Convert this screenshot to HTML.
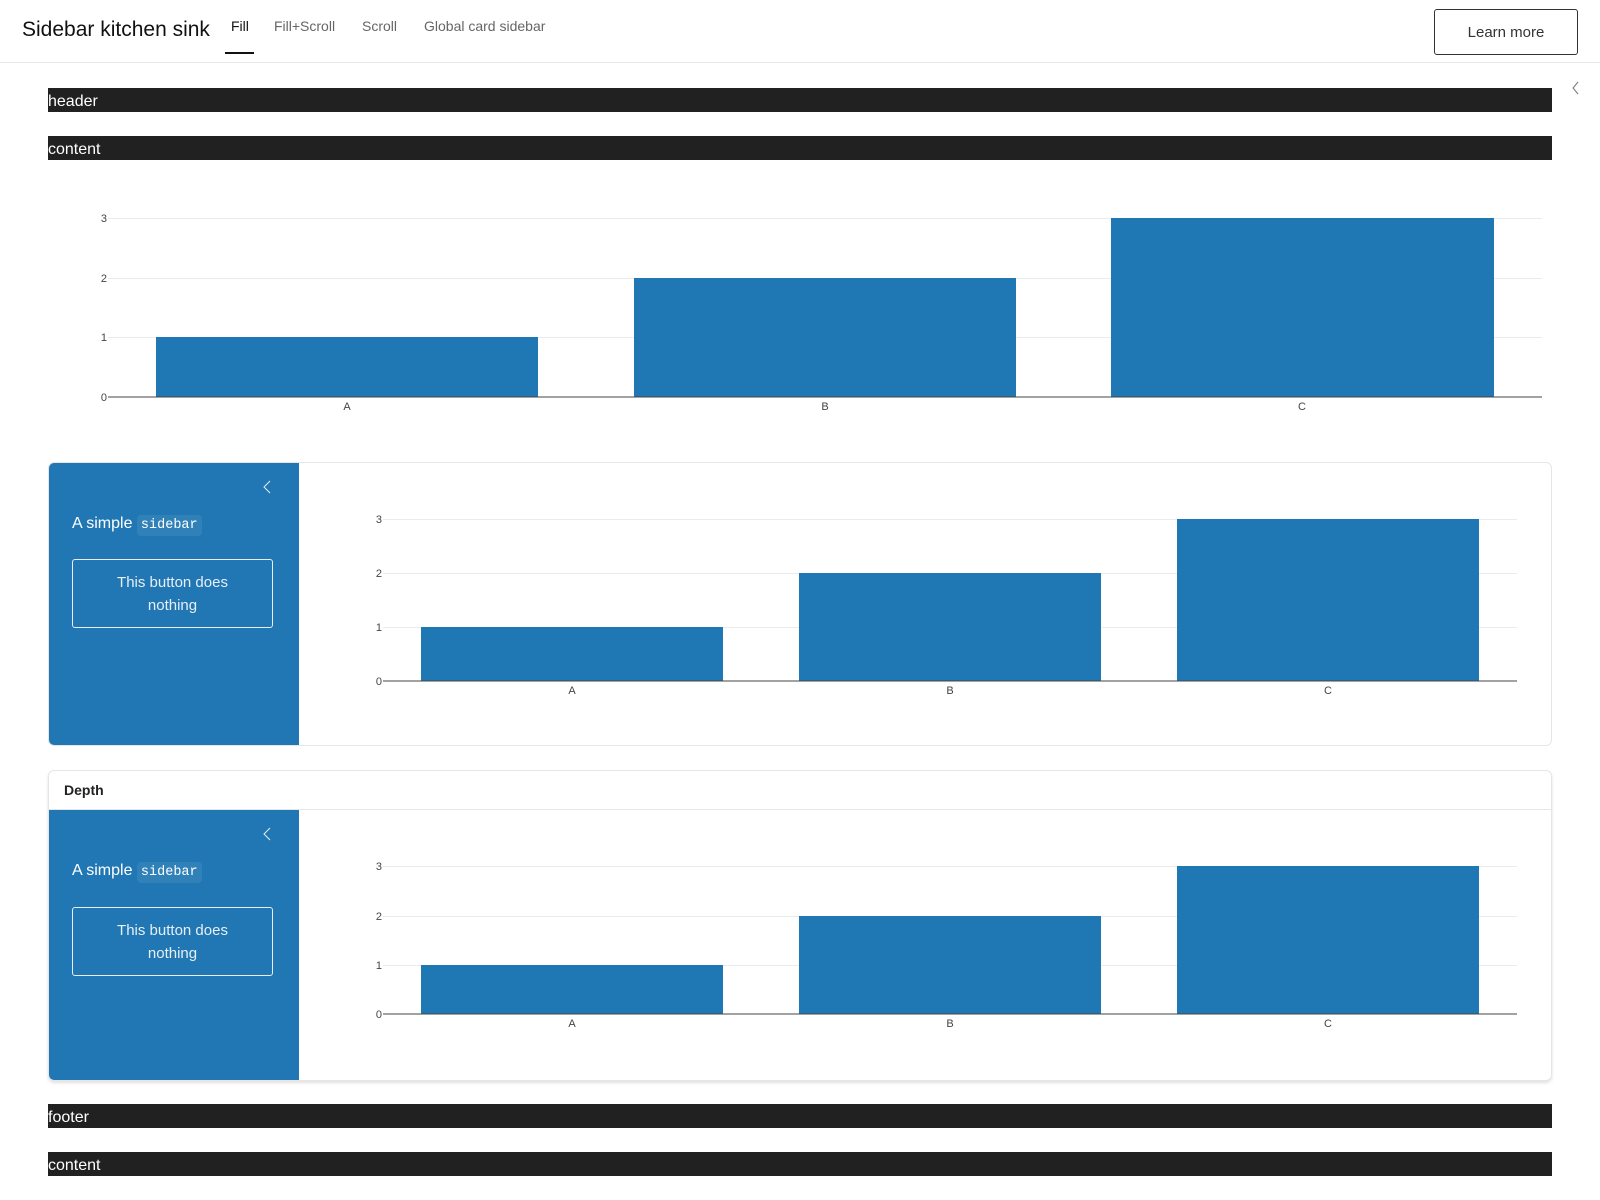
<!DOCTYPE html>
<html><head><meta charset="utf-8"><style>
*{box-sizing:border-box;margin:0;padding:0}
body{width:1600px;height:1200px;position:relative;background:#fff;font-family:"Liberation Sans","DejaVu Sans",sans-serif;color:#1d1d1d;overflow:hidden}
.a{position:absolute}
.bar{position:absolute;left:48px;width:1504px;height:24px;background:#212121;color:#fff;font-size:16px;line-height:28px}
.card{position:absolute;left:48px;width:1504px;border:1px solid #e6e6e6;border-radius:6px;overflow:hidden;background:#fff}
.side{position:absolute;left:0;width:250px;background:#2077b4;color:#fff}
.side .t{position:absolute;left:23px;font-size:16px}
.side code{font-family:"Liberation Mono",monospace;font-size:13.5px;background:rgba(255,255,255,.08);padding:3px 4px;border-radius:4px}
.side .btn{position:absolute;left:23px;width:201px;height:69px;border:1px solid #e8eef5;border-radius:3px;color:#e8eef5;font-size:15px;text-align:center;line-height:23px;padding-top:11px}
</style></head><body>
<div class="a" style="left:0;top:62px;width:1600px;height:1px;background:#e6e6e6"></div>
<div class="a" style="left:22px;top:18px;font-size:21px;color:#111">Sidebar kitchen sink</div>
<div class="a" style="left:231px;top:18px;font-size:14px;color:#111">Fill</div>
<div class="a" style="left:274px;top:18px;font-size:14px;color:#666">Fill+Scroll</div>
<div class="a" style="left:362px;top:18px;font-size:14px;color:#666">Scroll</div>
<div class="a" style="left:424px;top:18px;font-size:14px;color:#666">Global card sidebar</div>
<div class="a" style="left:225px;top:52px;width:29px;height:2px;background:#111"></div>
<div class="a" style="left:1434px;top:9px;width:144px;height:46px;border:1px solid #333;border-radius:3px;font-size:15px;line-height:46px;text-align:center;color:#333">Learn more</div>
<svg class="a" style="left:1568px;top:80px" width="16" height="16"><path d="M10 2 L5 8 L10 14" fill="none" stroke="#777" stroke-width="1"/></svg>

<div class="bar" style="top:88px">header</div>
<div class="bar" style="top:136px">content</div>

<div class="card" style="top:462px;height:284px">
 <div class="side" style="top:0;height:284px">
  <svg class="a" style="left:210px;top:16px" width="16" height="16"><path d="M11 2 L5 8 L11 14" fill="none" stroke="#e8eef5" stroke-width="1"/></svg>
  <div class="t" style="top:52px">A simple <code>sidebar</code></div>
  <div class="btn" style="top:96px">This button does<br>nothing</div>
 </div>
</div>

<div class="card" style="top:770px;height:311px;box-shadow:0 2px 3px rgba(0,0,0,.12)">
 <div class="a" style="left:15px;top:11px;font-size:14px;font-weight:bold;color:#222">Depth</div>
 <div class="a" style="left:0;top:38px;width:1504px;height:1px;background:#e6e6e6"></div>
 <div class="side" style="top:39px;height:272px">
  <svg class="a" style="left:210px;top:16px" width="16" height="16"><path d="M11 2 L5 8 L11 14" fill="none" stroke="#e8eef5" stroke-width="1"/></svg>
  <div class="t" style="top:52px">A simple <code>sidebar</code></div>
  <div class="btn" style="top:97px">This button does<br>nothing</div>
 </div>
</div>

<svg class="a" style="left:0;top:0" width="1600" height="1200" font-family="Liberation Sans, sans-serif" font-size="11" fill="#444">
 <g stroke="#ebebeb" stroke-width="1"><line x1="108" x2="1542" y1="218.5" y2="218.5"/><line x1="108" x2="1542" y1="278.5" y2="278.5"/><line x1="108" x2="1542" y1="337.5" y2="337.5"/></g>
 <rect x="156" y="337" width="382" height="60" fill="#1f77b4"/>
 <rect x="634" y="278" width="382" height="119" fill="#1f77b4"/>
 <rect x="1111" y="218" width="383" height="179" fill="#1f77b4"/>
 <line x1="108" x2="1542" y1="397" y2="397" stroke="#444" stroke-width="1"/>
 <g text-anchor="end"><text x="107" y="222">3</text><text x="107" y="282">2</text><text x="107" y="341">1</text><text x="107" y="401">0</text></g>
 <g text-anchor="middle"><text x="347" y="410">A</text><text x="825" y="410">B</text><text x="1302" y="410">C</text></g>
 <g stroke="#ebebeb"><line x1="383" x2="1517" y1="519.5" y2="519.5"/><line x1="383" x2="1517" y1="573.5" y2="573.5"/><line x1="383" x2="1517" y1="627.5" y2="627.5"/></g>
 <rect x="421" y="627" width="302" height="54" fill="#1f77b4"/>
 <rect x="799" y="573" width="302" height="108" fill="#1f77b4"/>
 <rect x="1177" y="519" width="302" height="162" fill="#1f77b4"/>
 <line x1="383" x2="1517" y1="681" y2="681" stroke="#444"/>
 <g text-anchor="end"><text x="382" y="523">3</text><text x="382" y="577">2</text><text x="382" y="631">1</text><text x="382" y="685">0</text></g>
 <g text-anchor="middle"><text x="572" y="694">A</text><text x="950" y="694">B</text><text x="1328" y="694">C</text></g>
 <g stroke="#ebebeb"><line x1="383" x2="1517" y1="866.5" y2="866.5"/><line x1="383" x2="1517" y1="916.5" y2="916.5"/><line x1="383" x2="1517" y1="965.5" y2="965.5"/></g>
 <rect x="421" y="965" width="302" height="49" fill="#1f77b4"/>
 <rect x="799" y="916" width="302" height="98" fill="#1f77b4"/>
 <rect x="1177" y="866" width="302" height="148" fill="#1f77b4"/>
 <line x1="383" x2="1517" y1="1014" y2="1014" stroke="#444"/>
 <g text-anchor="end"><text x="382" y="870">3</text><text x="382" y="920">2</text><text x="382" y="969">1</text><text x="382" y="1018">0</text></g>
 <g text-anchor="middle"><text x="572" y="1027">A</text><text x="950" y="1027">B</text><text x="1328" y="1027">C</text></g>
</svg>

<div class="bar" style="top:1104px">footer</div>
<div class="bar" style="top:1152px">content</div>
</body></html>
